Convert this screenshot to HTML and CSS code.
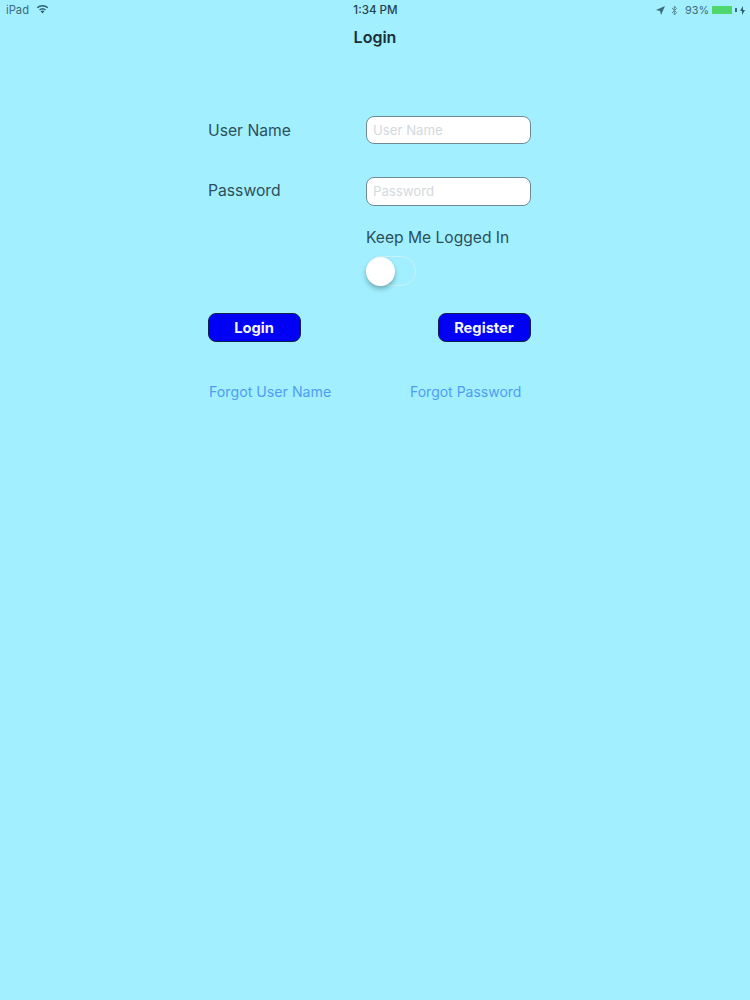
FILE: index.html
```html
<!DOCTYPE html>
<html lang="en">
  <head>
    <meta charset="UTF-8" />
    <meta name="viewport" content="width=device-width, initial-scale=1.0" />
    <title>Login</title>
    <link rel="stylesheet" href="styles.css">
  </head>
  <body>
    <div class="status-bar">
      <div class="status-left">
        <span>iPad</span>
        <svg class="wifi" width="13" height="10" viewBox="0 0 14 11">
          <path d="M7 10.5 L4.9 8 A3.2 3.2 0 0 1 9.1 8 Z" fill="#2f5f70" />
          <path d="M3.7 6.7 A5 5 0 0 1 10.3 6.7" fill="none" stroke="#2f5f70" stroke-width="1.5" />
          <path d="M1.2 4.2 A8.4 8.4 0 0 1 12.8 4.2" fill="none" stroke="#2f5f70" stroke-width="1.5" />
        </svg>
      </div>
      <div class="status-time">1:34 PM</div>
      <div class="status-right">
        <svg width="9" height="9" viewBox="0 0 9 9">
          <path d="M9 0 L0 4 L4 5 L5 9 Z" fill="#3d6c7c" />
        </svg>
        <svg class="bluetooth" width="7" height="11" viewBox="0 0 7 11">
          <path d="M1 3 L5.5 7.5 L3.3 10 V1 L5.5 3.5 L1 8" fill="none" stroke="#5b8796" stroke-width="1" />
        </svg>
        <span class="battery-text">93%</span>
        <div class="battery"><div class="battery-fill"></div></div>
        <div class="battery-cap"></div>
        <svg width="5" height="9" viewBox="0 0 5 9">
          <path d="M3 0 L0 5 H2 L2 9 L5 4 H3 Z" fill="#2f5f70" />
        </svg>
      </div>
    </div>

    <h1 class="nav-title">Login</h1>

    <form class="login-form">
      <div class="field-row">
        <label class="field-label">User Name</label>
        <input class="field-input" type="text" placeholder="User Name" />
      </div>
      <div class="field-row">
        <label class="field-label">Password</label>
        <input class="field-input" type="text" placeholder="Password" />
      </div>
      <div class="keep-block">
        <div class="keep-label">Keep Me Logged In</div>
        <div class="switch"><div class="knob"></div></div>
      </div>
      <div class="button-row">
        <button class="action-button" type="button">Login</button>
        <button class="action-button" type="button">Register</button>
      </div>
      <div class="link-row">
        <a class="forgot-link">Forgot User Name</a>
        <a class="forgot-link forgot-password">Forgot Password</a>
      </div>
    </form>
  </body>
</html>
```

FILE: styles.css
```css
html,
body {
  height: 100%;
}
body {
  margin: 0;
  background: #a2f0ff;
  font-family: Inter, "Liberation Sans", sans-serif;
  color: #2c4f5c;
  overflow: hidden;
}
.status-bar {
  display: grid;
  grid-template-columns: 1fr auto 1fr;
  align-items: center;
  height: 20px;
  padding: 0 5px 0 6px;
  font-size: 11.2px;
  color: #3d6c7c;
}
.status-left {
  display: flex;
  align-items: center;
  gap: 7px;
}
.wifi {
  margin-top: -2px;
}
.status-time {
  color: #22434f;
  font-size: 11.6px;
  font-weight: 500;
}
.status-right {
  display: flex;
  align-items: center;
  justify-content: flex-end;
  gap: 3px;
}
.bluetooth {
  margin-left: 3px;
}
.battery-text {
  margin-left: 4px;
  font-size: 10.8px;
}
.battery {
  width: 20px;
  height: 8px;
}
.battery-fill {
  width: 100%;
  height: 100%;
  background: #4fd66c;
}
.battery-cap {
  width: 2px;
  height: 4px;
  background: #3d6c7c;
}
.nav-title {
  margin: 7px 0 0;
  height: 20px;
  line-height: 20px;
  text-align: center;
  font-size: 16px;
  font-weight: 600;
  color: #1b2f38;
}
.login-form {
  width: 323px;
  margin: 0 0 0 208px;
  padding-top: 69px;
}
.field-row {
  display: grid;
  grid-template-columns: 158px 165px;
  align-items: center;
  height: 28px;
  margin-bottom: 33px;
}
.field-row + .field-row {
  height: 29px;
  margin-bottom: 0;
}
.field-label {
  font-size: 15.7px;
  color: #2c4f5c;
}
.field-row + .field-row .field-label {
  margin-top: -3px;
}
.field-input {
  box-sizing: border-box;
  width: 165px;
  height: 100%;
  padding: 0 6px 1px;
  border: 1.5px solid #6f8a94;
  border-radius: 8px;
  background: #fff;
  font-family: inherit;
  font-size: 13.2px;
}
.field-input::placeholder {
  color: #d3dade;
  opacity: 1;
}
.keep-block {
  padding: 21px 0 0 158px;
}
.keep-label {
  height: 22px;
  line-height: 22px;
  font-size: 15.6px;
  color: #2c4f5c;
}
.switch {
  box-sizing: border-box;
  position: relative;
  width: 50px;
  height: 30px;
  margin-top: 7px;
  border: 1px solid #c8f1f8;
  border-radius: 15px;
}
.knob {
  position: absolute;
  left: -1px;
  top: 0;
  width: 29px;
  height: 29px;
  border-radius: 50%;
  background: #fff;
  box-shadow: 0 3px 5px rgba(40, 70, 80, 0.4);
}
.button-row {
  display: flex;
  justify-content: space-between;
  margin-top: 27px;
}
.action-button {
  box-sizing: border-box;
  width: 93px;
  height: 29px;
  padding: 0 1px 0 0;
  border: 1.5px solid #12224f;
  border-radius: 8px;
  background: #0000f5;
  color: #f4f4ff;
  font-family: inherit;
  font-size: 14.7px;
  font-weight: 700;
}
.link-row {
  display: flex;
  margin-top: 40px;
  padding-left: 1px;
}
.forgot-link {
  width: 201px;
  height: 20px;
  line-height: 20px;
  font-size: 14.2px;
  color: #4f9cf5;
}
.forgot-password {
  width: auto;
  font-size: 14px;
}
```
